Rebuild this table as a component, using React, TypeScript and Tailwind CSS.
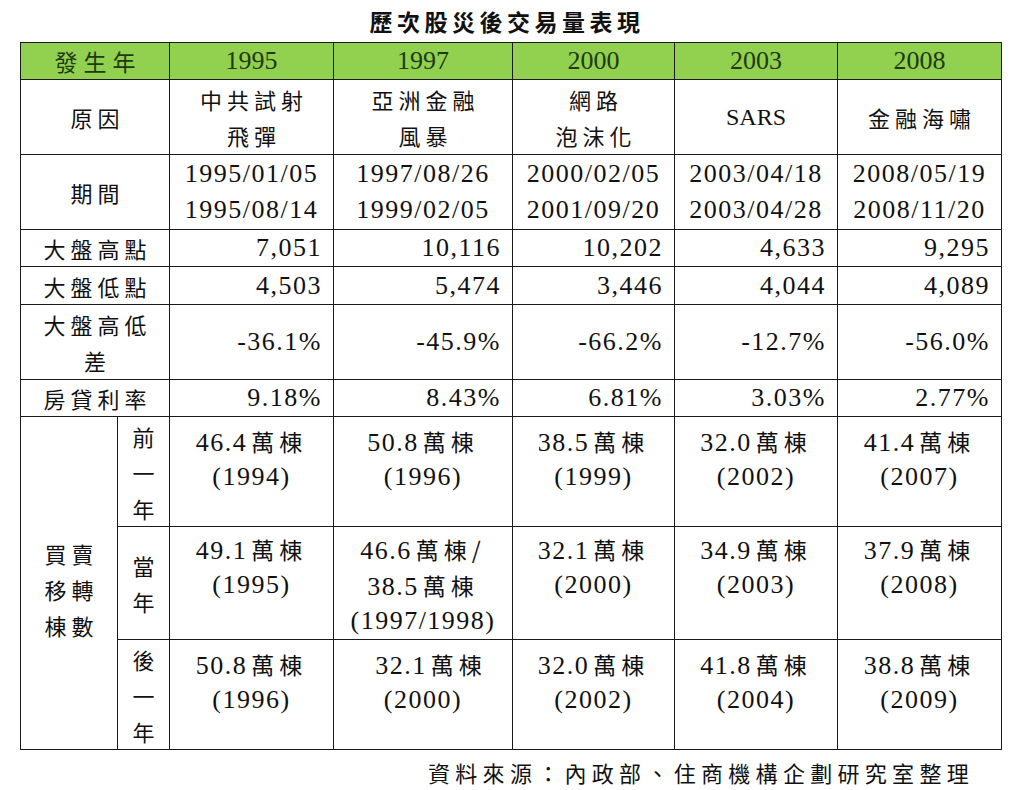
import React from "react";

// 數字與拉丁字用 Liberation Serif，中文字另以 Noto Sans CJK TC 排
function N({ children, className = "" }: { children: React.ReactNode; className?: string }) {
  return <span className={`font-['Liberation_Serif','Noto_Sans_CJK_TC',serif] text-[26px] tracking-[1.5px] ${className}`}>{children}</span>;
}

function C({ children, className = "" }: { children: React.ReactNode; className?: string }) {
  return <span className={`font-['Noto_Sans_CJK_TC',sans-serif] text-[22px] tracking-[5px] ${className}`}>{children}</span>;
}

// 每一行固定 36px 高，避免中英混排把列撐高
function L({ children, className = "" }: { children: React.ReactNode; className?: string }) {
  return <div className={`h-[36px] leading-[36px] whitespace-nowrap ${className}`}>{children}</div>;
}

const td = "border border-[#1a1a1a] p-0 text-[#111]";

const years = ["1995", "1997", "2000", "2003", "2008"];

const highs = ["7,051", "10,116", "10,202", "4,633", "9,295"];
const lows = ["4,503", "5,474", "3,446", "4,044", "4,089"];
const diffs = ["-36.1%", "-45.9%", "-66.2%", "-12.7%", "-56.0%"];
const rates = ["9.18%", "8.43%", "6.81%", "3.03%", "2.77%"];

const periods = [
  ["1995/01/05", "1995/08/14"],
  ["1997/08/26", "1999/02/05"],
  ["2000/02/05", "2001/09/20"],
  ["2003/04/18", "2003/04/28"],
  ["2008/05/19", "2008/11/20"],
];

const before = [
  ["46.4", "1994"],
  ["50.8", "1996"],
  ["38.5", "1999"],
  ["32.0", "2002"],
  ["41.4", "2007"],
];
const current = [
  ["49.1", "1995"],
  null,
  ["32.1", "2000"],
  ["34.9", "2003"],
  ["37.9", "2008"],
];
const after = [
  ["50.8", "1996"],
  ["32.1", "2000"],
  ["32.0", "2002"],
  ["41.8", "2004"],
  ["38.8", "2009"],
];

function Houses({ num, year, shift = false }: { num: string; year: string; shift?: boolean }) {
  return (
    <>
      <L className={shift ? "pl-[16px]" : ""}>
        <N>{num}</N> <C className="text-[23px] tracking-[3px]">萬棟</C>
      </L>
      <L>
        <N>({year})</N>
      </L>
    </>
  );
}

function NumRow({ label, values, h }: { label: string[]; values: string[]; h: string }) {
  return (
    <tr>
      <td colSpan={2} className={`${td} ${h} text-center`}>
        {label.map((t) => (
          <L key={t}>
            <C className="pl-[5px]">{t}</C>
          </L>
        ))}
      </td>
      {values.map((v) => (
        <td key={v} className={`${td} ${h} text-right pr-[11px]`}>
          <L>
            <N>{v}</N>
          </L>
        </td>
      ))}
    </tr>
  );
}

export default function App() {
  return (
    <div className="w-[1024px] h-[790px] bg-white overflow-hidden">
      <div className="h-[42px] flex items-center justify-center pr-[10px]">
        <span className="font-['Noto_Sans_CJK_TC',sans-serif] font-bold text-[23px] tracking-[4.5px] text-[#111] leading-none">
          歷次股災後交易量表現
        </span>
      </div>

      <table className="ml-[20px] w-[981px] table-fixed border-collapse">
        <colgroup>
          <col className="w-[97px]" />
          <col className="w-[52px]" />
          <col className="w-[164px]" />
          <col className="w-[179px]" />
          <col className="w-[162px]" />
          <col className="w-[163px]" />
          <col className="w-[164px]" />
        </colgroup>
        <tbody>
          <tr className="bg-[#92d050]">
            <td colSpan={2} className={`${td} h-[37px] text-center !text-[#1d3a12]`}>
              <L>
                <C className="text-[23px] tracking-[6px] pl-[6px]">發生年</C>
              </L>
            </td>
            {years.map((y) => (
              <td key={y} className={`${td} h-[37px] text-center !text-[#1d3a12]`}>
                <L>
                  <N className="tracking-normal">{y}</N>
                </L>
              </td>
            ))}
          </tr>

          <tr>
            <td colSpan={2} className={`${td} h-[75px] text-center`}>
              <L>
                <C className="pl-[5px]">原因</C>
              </L>
            </td>
            {[
              ["中共試射", "飛彈"],
              ["亞洲金融", "風暴"],
              ["網路", "泡沫化"],
            ].map((r) => (
              <td key={r[0]} className={`${td} h-[75px] text-center`}>
                <L>
                  <C className="pl-[5px]">{r[0]}</C>
                </L>
                <L>
                  <C className="pl-[5px]">{r[1]}</C>
                </L>
              </td>
            ))}
            <td className={`${td} h-[75px] text-center`}>
              <L>
                <span className="font-['Liberation_Serif',serif] text-[24px]">SARS</span>
              </L>
            </td>
            <td className={`${td} h-[75px] text-center`}>
              <L>
                <C className="pl-[5px]">金融海嘯</C>
              </L>
            </td>
          </tr>

          <tr>
            <td colSpan={2} className={`${td} h-[75px] text-center`}>
              <L>
                <C className="pl-[5px]">期間</C>
              </L>
            </td>
            {periods.map((p) => (
              <td key={p[0]} className={`${td} h-[75px] text-center`}>
                <L>
                  <N>{p[0]}</N>
                </L>
                <L>
                  <N>{p[1]}</N>
                </L>
              </td>
            ))}
          </tr>

          <NumRow label={["大盤高點"]} values={highs} h="h-[37px]" />
          <NumRow label={["大盤低點"]} values={lows} h="h-[38px]" />
          <NumRow label={["大盤高低", "差"]} values={diffs} h="h-[75px]" />
          <NumRow label={["房貸利率"]} values={rates} h="h-[37px]" />

          <tr>
            <td rowSpan={3} className={`${td} text-center align-middle pt-[12px]`}>
              {["買賣", "移轉", "棟數"].map((t) => (
                <L key={t}>
                  <C className="pl-[5px]">{t}</C>
                </L>
              ))}
            </td>
            <td className={`${td} h-[109px] text-center align-top pt-[1px]`}>
              {["前", "一", "年"].map((t) => (
                <L key={t}>
                  <C className="pl-[5px]">{t}</C>
                </L>
              ))}
            </td>
            {before.map((b) => (
              <td key={b[1]} className={`${td} h-[109px] text-center align-top pt-[6px]`}>
                <Houses num={b[0]} year={b[1]} />
              </td>
            ))}
          </tr>

          <tr>
            <td className={`${td} h-[111px] text-center align-middle`}>
              {["當", "年"].map((t) => (
                <L key={t}>
                  <C className="pl-[5px]">{t}</C>
                </L>
              ))}
            </td>
            {current.map((c, i) =>
              c ? (
                <td key={c[1]} className={`${td} h-[111px] text-center align-top pt-[4px]`}>
                  <Houses num={c[0]} year={c[1]} />
                </td>
              ) : (
                <td key={i} className={`${td} h-[111px] text-center align-top pt-[4px]`}>
                  <L>
                    <N>46.6</N> <C className="text-[23px] tracking-[3px]">萬棟/</C>
                  </L>
                  <L>
                    <N>38.5</N> <C className="text-[23px] tracking-[3px]">萬棟</C>
                  </L>
                  <L>
                    <N className="tracking-[0.5px]">(1997/1998)</N>
                  </L>
                </td>
              )
            )}
          </tr>

          <tr>
            <td className={`${td} h-[110px] text-center align-top pt-[1px]`}>
              {["後", "一", "年"].map((t) => (
                <L key={t}>
                  <C className="pl-[5px]">{t}</C>
                </L>
              ))}
            </td>
            {after.map((a, i) => (
              <td key={a[1] + i} className={`${td} h-[110px] text-center align-top pt-[6px]`}>
                <Houses num={a[0]} year={a[1]} shift={i === 1} />
              </td>
            ))}
          </tr>
        </tbody>
      </table>

      <div className="flex justify-end pr-[50px] pt-[7px]">
        <span className="font-['Noto_Sans_CJK_TC',sans-serif] text-[22px] tracking-[5.3px] text-[#111] leading-[30px]">
          資料來源：內政部、住商機構企劃研究室整理
        </span>
      </div>
    </div>
  );
}
